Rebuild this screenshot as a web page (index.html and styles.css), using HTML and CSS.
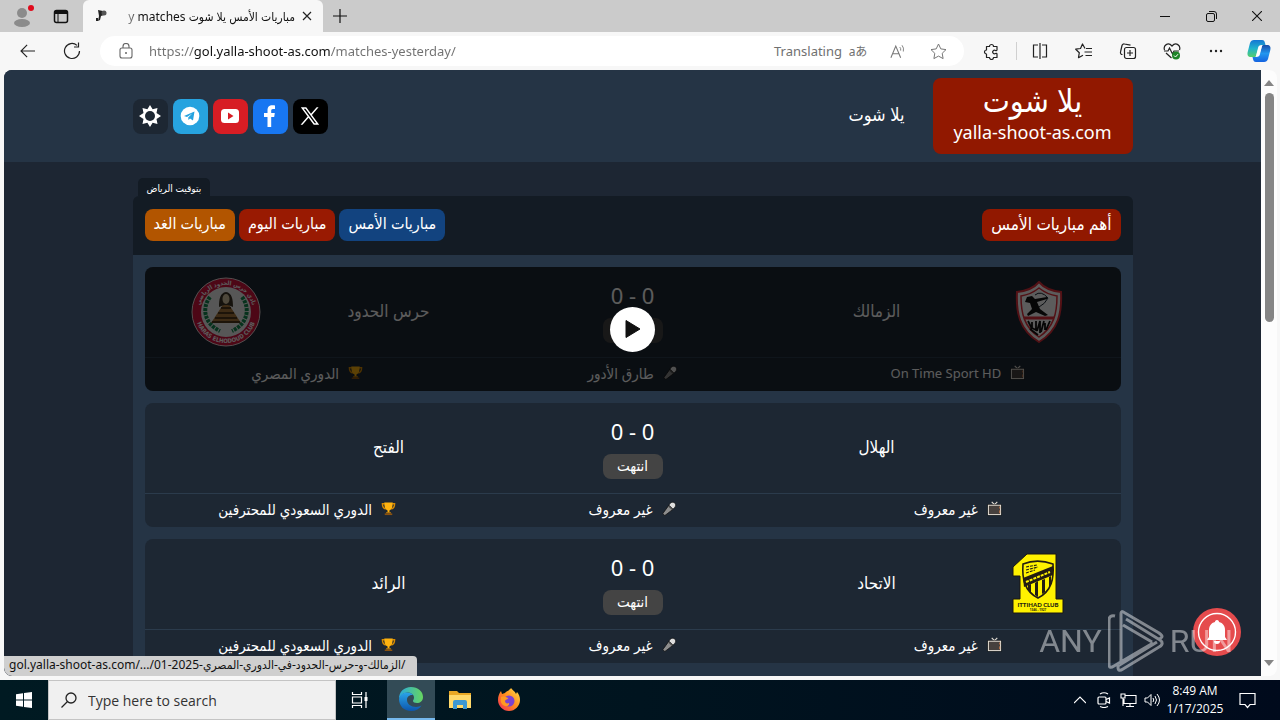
FILE: index.html
```
<!DOCTYPE html>
<html lang="ar">
<head>
    <meta charset="UTF-8">
    <meta name="viewport" content="width=device-width, initial-scale=1.0">
    <title>مباريات الأمس يلا شوت</title>
    <link rel="stylesheet" href="styles.css">
</head>
<body>
    <!-- Shared icons -->
    <svg class="sprite" aria-hidden="true">
        <symbol id="i-tv" viewBox="0 0 16 16">
            <path d="M5 1l3 3 3-3" fill="none" stroke="#e4ded4" stroke-width="1.200"/>
            <rect x=".5" y="3.500" width="15" height="12" fill="#0c0c0c"/>
            <rect x="1.500" y="4.500" width="13" height="10" fill="#47413e" stroke="#e4ded4" stroke-width="1.100"/>
            <path d="M13.500 6v2M13.500 10v3" stroke="#c77a4a" stroke-width="1"/>
        </symbol>
        <symbol id="i-mic" viewBox="0 0 16 16">
            <path d="M3 15.500L.8 13.500 7 5l4.500 4z" fill="#8d8d8d" stroke="#111" stroke-width=".8"/>
            <path d="M7.500 4.500c1-3 4-4 6-2.500 2 2 1 5-2 6.500z" fill="#dedede" stroke="#111" stroke-width=".8"/>
            <path d="M7 5.500l4 3.500" stroke="#555" stroke-width="1.300"/>
        </symbol>
        <symbol id="i-cup" viewBox="0 0 16 16">
            <path d="M4 3H1.500c0 3 1 5 3.500 5.500M12 3h2.500c0 3-1 5-3.500 5.500" fill="none" stroke="#d88b00" stroke-width="1.500"/>
            <path d="M3.500 1.500h9c0 5-1 7.500-3.500 8.500v2H7v-2C4.500 9 3.500 6.500 3.500 1.500z" fill="#ffb310"/>
            <path d="M5.500 12h5v1.200h-5z" fill="#d88b00"/>
            <path d="M4 13.200h8V15H4z" fill="#8a5210"/>
        </symbol>
    </svg>

    <div class="tab-strip">
        <button class="strip-button profile" aria-label="Profile">
            <svg width="24" height="24" viewBox="0 0 24 24"><circle cx="11" cy="9" r="5" fill="#8b8b8b"/><ellipse cx="11" cy="19" rx="8" ry="4" fill="#8b8b8b"/><circle cx="20" cy="4" r="3" fill="#e00b1c"/></svg>
        </button>
        <button class="strip-button" aria-label="Tab actions">
            <svg width="16" height="16" viewBox="0 0 16 16"><rect x="1.500" y="2.500" width="13" height="12" rx="2" fill="none" stroke="#111" stroke-width="1.500"/><path d="M2 3h12v3H2z" fill="#111"/><path d="M5 6v8" stroke="#111"/></svg>
        </button>
        <div class="tab">
            <svg width="14" height="14" viewBox="0 0 14 14"><path d="M3 1l5 1 3 1-2 3-3 1-1 4-2 1 1-5zM1 9h2v3H1z" fill="#222"/><circle cx="9" cy="4" r="2.500" fill="#555"/></svg>
            <span class="tab-title" dir="rtl">مباريات الأمس يلا شوت y matches</span>
            <button class="tab-close" aria-label="Close tab">
                <svg width="10" height="10" viewBox="0 0 10 10"><path d="M1 1l8 8M9 1l-8 8" stroke="#222" stroke-width="1.200"/></svg>
            </button>
        </div>
        <button class="new-tab" aria-label="New tab">
            <svg width="14" height="14" viewBox="0 0 14 14"><path d="M7 0v14M0 7h14" stroke="#111" stroke-width="1.200"/></svg>
        </button>
        <div class="window-controls">
            <button aria-label="Minimize"><svg width="10" height="10" viewBox="0 0 10 10"><path d="M0 5.500h10" stroke="#111"/></svg></button>
            <button aria-label="Restore"><svg width="11" height="11" viewBox="0 0 11 11"><rect x=".5" y="2.500" width="8" height="8" rx="1.500" fill="none" stroke="#111"/><path d="M3 .5h5a2.500 2.500 0 0 1 2.500 2.500v5" fill="none" stroke="#111"/></svg></button>
            <button aria-label="Close"><svg width="10" height="10" viewBox="0 0 10 10"><path d="M0 0l10 10M10 0L0 10" stroke="#111" stroke-width="1.100"/></svg></button>
        </div>
    </div>

    <div class="toolbar">
        <button class="nav-button" aria-label="Back"><svg width="16" height="14" viewBox="0 0 18 16"><path d="M17 8H1.500M8 1L1 8l7 7" fill="none" stroke="#222" stroke-width="1.300"/></svg></button>
        <button class="nav-button" aria-label="Refresh"><svg width="18" height="18" viewBox="0 0 18 18"><path d="M16.500 9A7.500 7.500 0 1 1 14 3.400M15.500.5V5H11" fill="none" stroke="#222" stroke-width="1.200"/></svg></button>
        <div class="address">
            <svg width="14" height="16" viewBox="0 0 14 16"><rect x="1" y="5" width="12" height="10" rx="2" fill="none" stroke="#666" stroke-width="1.100"/><path d="M4 5V3.500a3 3 0 0 1 6 0V5" fill="none" stroke="#666" stroke-width="1.100"/><circle cx="7" cy="10" r="1" fill="#666"/></svg>
            <input class="url" type="text" aria-label="Address" value="https://gol.yalla-shoot-as.com/matches-yesterday/">
            <span class="translating">Translating</span>
            <button class="translate" aria-label="Translate">aあ</button>
            <button aria-label="Read aloud"><svg width="16" height="15" viewBox="0 0 18 16"><path d="M1 15L6.500 2 12 15M3 10.500h7" fill="none" stroke="#777" stroke-width="1.200"/><path d="M11 3q1.500 1.500 1 4M13.500 1q2.500 3 1.500 7" fill="none" stroke="#777"/></svg></button>
            <button aria-label="Favorite"><svg width="17" height="17" viewBox="0 0 17 17"><path d="M8.500 1l2.300 4.900 5.200.7-3.800 3.700.9 5.300-4.600-2.500-4.600 2.500.9-5.300L1 6.600l5.200-.7z" fill="none" stroke="#777" stroke-linejoin="round"/></svg></button>
        </div>
        <button class="tool" aria-label="Extensions"><svg width="16" height="17" viewBox="0 0 16 17"><path d="M3.500 3.500h3a2 2 0 0 1 4 0h3.500v3.500a1 1 0 0 1-1.500.5 1.800 1.800 0 1 0 0 3 1 1 0 0 1 1.500.5v3.500h-3.500a2 2 0 0 1-4 0h-3V11a2 2 0 1 1 0-4z" fill="none" stroke="#222" stroke-width="1.200" stroke-linejoin="round"/></svg></button>
        <span class="divider"></span>
        <button class="tool" aria-label="Split screen"><svg width="16" height="16" viewBox="0 0 16 16"><path d="M6 2H1.500v12H6M10 2h4.500v12H10M8 0v16" fill="none" stroke="#222" stroke-width="1.200"/></svg></button>
        <button class="tool" aria-label="Favorites"><svg width="18" height="16" viewBox="0 0 18 16"><path d="M10 5.500L7.500 1 5.500 5.500l-4.800.7 3.600 3.500-.8 5 4.500-2.500M11 5.500h6M9.500 9H17M10.500 12.500H17" fill="none" stroke="#222" stroke-width="1.200" stroke-linejoin="round"/></svg></button>
        <button class="tool" aria-label="Collections"><svg width="18" height="18" viewBox="0 0 18 18"><path d="M3.500 12.500A2 2 0 0 1 1.500 10L3 3.500A2 2 0 0 1 5.500 2l6 1.200" fill="none" stroke="#222" stroke-width="1.200"/><rect x="5.500" y="5.500" width="11" height="11" rx="2" fill="none" stroke="#222" stroke-width="1.200"/><path d="M11 8v6M8 11h6" stroke="#222" stroke-width="1.200"/></svg></button>
        <button class="tool" aria-label="Browser essentials"><svg width="18" height="18" viewBox="0 0 18 18"><path d="M1.500 8C0 3.500 5-.5 9 4c4-4.500 9-.5 7.500 4M1 9h4l1.500-3 3 6L11 9h5M3 11l5.500 5" fill="none" stroke="#222" stroke-width="1.200"/><circle cx="13" cy="13.500" r="4" fill="#1e8428"/><path d="M11 13.500l1.500 1.500 2.500-2.800" fill="none" stroke="#fff"/></svg></button>
        <button class="tool" aria-label="More"><svg width="14" height="4" viewBox="0 0 14 4"><g fill="#222"><circle cx="2" cy="2" r="1.200"/><circle cx="7" cy="2" r="1.200"/><circle cx="12" cy="2" r="1.200"/></g></svg></button>
        <button class="tool copilot" aria-label="Copilot">
            <svg width="24" height="24" viewBox="0 0 24 24">
                <defs>
                    <linearGradient id="cp1" x1="0" y1="0" x2="0" y2="1"><stop offset="0" stop-color="#1476d4"/><stop offset=".5" stop-color="#20b3cc"/><stop offset="1" stop-color="#55cf6d"/></linearGradient>
                    <linearGradient id="cp2" x1="0" y1="0" x2="0" y2="1"><stop offset="0" stop-color="#174ba8"/><stop offset=".5" stop-color="#2296ef"/><stop offset="1" stop-color="#1463e0"/></linearGradient>
                </defs>
                <path d="M7 1h8c2 0 2.500 1 3 3l.5 2h-4c-2 0-3 1-3.500 3l-2 8c-.5 1-1 1-2 1H4c-3 0-4-2-3.300-5L3 4c.7-2 2-3 4-3z" fill="url(#cp1)"/>
                <path d="M17 23H9c-2 0-2.500-1-3-3l-.5-2h4c2 0 3-1 3.500-3l2-8c.5-1 1-1 2-1h3c3 0 4 2 3.300 5L21 20c-.7 2-2 3-4 3z" fill="url(#cp2)"/>
                <path d="M12 7h3l-3 10H9z" fill="#fff" opacity=".85"/>
            </svg>
        </button>
    </div>

    <div class="viewport">
        <div class="site" dir="rtl">
            <header class="header">
                <div class="container header-inner">
                    <a class="brand" href="#">
                        <span class="brand-name">يلا شوت</span>
                        <span class="brand-domain">yalla-shoot-as.com</span>
                    </a>
                    <a class="nav-link" href="#">يلا شوت</a>
                    <div class="social">
                        <a class="social-x" href="#" aria-label="X"><svg width="20" height="20" viewBox="0 0 24 24"><path d="M1 1.500h6.500l5.700 7.700L20 1.500h2.300l-8 9.200L23 22.500h-6.500l-6.200-8.300L3 22.500H.7l8.500-9.900zM4.500 3.300l13 17.400h2L6.600 3.300z" fill="#fff" fill-rule="evenodd"/></svg></a>
                        <a class="social-facebook" href="#" aria-label="Facebook"><svg width="22" height="24" viewBox="0 0 22 24"><path d="M8.500 23v-10H5V9h3.500V6.500C8.500 3 10 1.300 13.500 1.300c1 0 2 .1 2.500.2V5h-2c-1.500 0-1.800.8-1.800 2v2h3.600l-.6 4h-3v10z" fill="#fff"/></svg></a>
                        <a class="social-youtube" href="#" aria-label="YouTube"><svg width="20" height="20" viewBox="0 0 20 20"><rect x="1" y="3" width="18" height="14" rx="3.500" fill="#fff"/><path d="M8 6.500l5.500 3.500L8 13.500z" fill="#d71d24"/></svg></a>
                        <a class="social-telegram" href="#" aria-label="Telegram"><svg width="20" height="20" viewBox="0 0 20 20"><circle cx="10" cy="10" r="9.300" fill="#fff"/><path d="M4 10l10.500-4.500-1.500 9-3-2-1.500 1.500-.3-2.500 4-4-5.200 3.400z" fill="#27a3df"/></svg></a>
                        <button class="theme" aria-label="Theme"><svg width="24" height="24" viewBox="0 0 24 24"><path d="M12 1l2.600 4.200 4.900-1.200-1 4.900L23 12l-4.500 3 1 4.900-4.900-1.100L12 23l-2.600-4.200-4.900 1.100 1-4.900L1 12l4.500-3.100-1-4.900 4.900 1.200z" fill="#fff"/><circle cx="12" cy="12" r="5" fill="#1d2733"/><circle cx="12" cy="12" r="3.800" fill="#1d2733"/></svg></button>
                    </div>
                </div>
            </header>

            <main class="container matches">
                <div class="timezone">بتوقيت الرياض</div>
                <div class="matches-head">
                    <h1 class="matches-title">أهم مباريات الأمس</h1>
                    <nav class="days">
                        <a class="day day-yesterday" href="#">مباريات الأمس</a>
                        <a class="day day-today" href="#">مباريات اليوم</a>
                        <a class="day day-tomorrow" href="#">مباريات الغد</a>
                    </nav>
                </div>
                <div class="match-list">
                    <a class="match" href="#">
                        <div class="match-teams">
                            <span class="crest">
                                <svg width="48" height="62" viewBox="0 0 48 62">
                                    <path d="M24 1c5 6 13 9 22 10 1 20-2 38-22 50C4 49 1 31 2 11 11 10 19 7 24 1z" fill="#fff" stroke="#e3303c" stroke-width="2"/>
                                    <path d="M24 7c5 4 11 7 18 8 0 17-3 31-18 41C9 46 6 32 6 15 13 14 19 11 24 7z" fill="#fff" stroke="#e3303c" stroke-width="1.500"/>
                                    <path d="M12 16l5-1 3 3 12-2v2l-10 3 3 7 8 6-3 1-9-4-8 4-1-2 5-5-2-6-5-1z" fill="#111"/>
                                    <path d="M20 14q6-5 13 3q-3 6-9 9" fill="none" stroke="#1b2733"/>
                                    <path d="M9 37h30" stroke="#e3303c" stroke-width="3"/>
                                    <path d="M13 40l4 8M17 41v6l4 2v-9M22 50l3-10v12M29 40l-3 11M30 42v7M35 40l-4 9M15 48l8 6" stroke="#111" stroke-width="1.800" fill="none"/>
                                </svg>
                            </span>
                            <span class="team">الزمالك</span>
                            <span class="result"><span class="score">0 - 0</span><span class="state">انتهت</span></span>
                            <span class="team">حرس الحدود</span>
                            <span class="crest">
                                <svg width="70" height="70" viewBox="0 0 70 70">
                                    <defs>
                                        <path id="ring-bottom" d="M4 35a31 31 0 0 0 62 0"/>
                                        <path id="ring-top" d="M8 35a27 27 0 0 1 54 0"/>
                                    </defs>
                                    <circle cx="35" cy="35" r="34" fill="#d4143f" stroke="#e9d9d9" stroke-width="1"/>
                                    <circle cx="35" cy="35" r="25" fill="#f2f2f2"/>
                                    <path d="M19 20c-9 12-5 27 10 34M51 20c9 12 5 27-10 34" fill="none" stroke="#168a50" stroke-width="4" stroke-dasharray="3 1"/>
                                    <path d="M35 23l15 23H20z" fill="#a8793b"/>
                                    <path d="M30 31h10M27 36h16M24 41h22M21 45h28" stroke="#33230f" stroke-width="1.500"/>
                                    <path d="M28 30c0-8 1-14 7-15 6 1 7 7 7 15l-5-2h-4z" fill="#3c3424"/>
                                    <ellipse cx="35" cy="22" rx="3.500" ry="5" fill="#d9c7a4"/>
                                    <text class="crest-text"><textPath href="#ring-bottom" startOffset="50%" text-anchor="middle">HARAS ELHODOUD CLUB</textPath></text>
                                    <text class="crest-text"><textPath href="#ring-top" startOffset="50%" text-anchor="middle">نادي حرس الحدود الرياضي</textPath></text>
                                </svg>
                            </span>
                        </div>
                        <div class="match-info">
                            <span class="latin"><svg class="icon"><use href="#i-tv"/></svg>On Time Sport HD</span>
                            <span><svg class="icon"><use href="#i-mic"/></svg>طارق الأدور</span>
                            <span><svg class="icon"><use href="#i-cup"/></svg>الدوري المصري</span>
                        </div>
                        <div class="match-overlay">
                            <span class="play"><svg width="16" height="20" viewBox="0 0 16 20"><path d="M1 1.500v17L15 10z" fill="#111" stroke="#111" stroke-linejoin="round"/></svg></span>
                        </div>
                    </a>

                    <a class="match" href="#">
                        <div class="match-teams">
                            <span class="crest"></span>
                            <span class="team">الهلال</span>
                            <span class="result"><span class="score">0 - 0</span><span class="state">انتهت</span></span>
                            <span class="team">الفتح</span>
                            <span class="crest"></span>
                        </div>
                        <div class="match-info">
                            <span><svg class="icon"><use href="#i-tv"/></svg>غير معروف</span>
                            <span><svg class="icon"><use href="#i-mic"/></svg>غير معروف</span>
                            <span><svg class="icon"><use href="#i-cup"/></svg>الدوري السعودي للمحترفين</span>
                        </div>
                    </a>

                    <a class="match" href="#">
                        <div class="match-teams">
                            <span class="crest">
                                <svg width="54" height="62" viewBox="0 0 54 62">
                                    <path d="M15 1h29v45h7v14H1V46h7V23H1V14z" fill="#fff200" stroke="#1a1712" stroke-width="1"/>
                                    <path d="M11 11c10-4 19-4 30 0 1 14-1 27-15 34-14-7-16-20-15-34z" fill="#fff200" stroke="#231c12" stroke-width="1.600"/>
                                    <path d="M11 25l30-12v9L12 34z" fill="#231c12"/>
                                    <path d="M14 29l24-10" stroke="#fff200" stroke-width="2" stroke-dasharray="3 1"/>
                                    <path d="M14 14l11-2M14 17l12-3M14 20l9-3" stroke="#231c12" stroke-width="1.200" stroke-dasharray="3 1"/>
                                    <path d="M16 32v5l3 3v-9zM23 30v12l3 2V28zM30 27v14l3-2V26zM37 24v11l2-4v-8z" fill="#231c12"/>
                                    <text class="club-name" x="26" y="54" text-anchor="middle">ITTIHAD CLUB</text>
                                    <text class="club-year" x="26" y="58" text-anchor="middle">1927 - 1346</text>
                                </svg>
                            </span>
                            <span class="team">الاتحاد</span>
                            <span class="result"><span class="score">0 - 0</span><span class="state">انتهت</span></span>
                            <span class="team">الرائد</span>
                            <span class="crest"></span>
                        </div>
                        <div class="match-info">
                            <span><svg class="icon"><use href="#i-tv"/></svg>غير معروف</span>
                            <span><svg class="icon"><use href="#i-mic"/></svg>غير معروف</span>
                            <span><svg class="icon"><use href="#i-cup"/></svg>الدوري السعودي للمحترفين</span>
                        </div>
                    </a>
                </div>
            </main>
        </div>
        <div class="scrollbar">
            <svg width="10" height="6" viewBox="0 0 10 6"><path d="M5 0l5 6H0z" fill="#858585"/></svg>
            <div class="scroll-thumb"></div>
            <svg width="10" height="6" viewBox="0 0 10 6"><path d="M5 6l5-6H0z" fill="#858585"/></svg>
        </div>

        <button class="bell" aria-label="Notifications">
            <svg width="48" height="48" viewBox="0 0 48 48"><circle cx="24" cy="24" r="24" fill="#e54b4d"/><circle cx="24" cy="24" r="18.500" fill="none" stroke="#fff" stroke-width="1.400"/><path d="M24 12c1.500 0 2 1 2 2 4 1 6 4 6 8v7l2 3H14l2-3v-7c0-4 2-7 6-8 0-1 .5-2 2-2zM21 33h6a3 3 0 0 1-6 0z" fill="#fff"/></svg>
        </button>
        <div class="watermark">
            <span>ANY</span>
            <svg width="56" height="64" viewBox="0 0 56 64"><path d="M7 7c-4-1-6 1-6 4v44c0 4 2 4 5 2l39-23M13 36V5c0-3 1-3 4-1l34 20c4 3 4 4 0 6M13 11v44l36-22M15 16l29 17M10 56v2c0 4 2 4 5 2l36-22c4-2 4-5 1-7L18 10" fill="none" stroke="currentColor" stroke-width="3"/></svg>
            <span>RUN</span>
        </div>
        <div class="status-bubble" dir="ltr">gol.yalla-shoot-as.com/.../الزمالك-و-حرس-الحدود-في-الدوري-المصري-2025-01/</div>
    </div>

    <div class="taskbar">
        <button class="start" aria-label="Start"><svg width="16" height="16" viewBox="0 0 16 16"><path d="M0 2.300L7 1.200v6.300H0zM8 1l8-1v7.500H8zM0 8.500h7v6.300l-7-1zM8 8.500h8V16l-8-1z" fill="#fff"/></svg></button>
        <label class="search">
            <svg width="16" height="16" viewBox="0 0 16 16"><circle cx="10" cy="6" r="5" fill="none" stroke="#222" stroke-width="1.300"/><path d="M6.500 9.500L.5 15.500" stroke="#222" stroke-width="1.300"/></svg>
            <input type="text" placeholder="Type here to search" aria-label="Type here to search">
        </label>
        <button class="app" aria-label="Task view"><svg width="18" height="16" viewBox="0 0 18 16"><path d="M1.500 0v2.500h9V0M1.500 16v-2.500h9V16M1.500 5h9v6h-9zM15 0v16" fill="none" stroke="#fff" stroke-width="1.200"/><path d="M13.500 5h3v4h-3z" fill="#fff"/></svg></button>
        <button class="app app-active" aria-label="Microsoft Edge">
            <svg width="24" height="24" viewBox="0 0 24 24">
                <defs>
                    <linearGradient id="e1" x1="0" y1="0" x2="1" y2="0"><stop offset="0" stop-color="#2aa9dc"/><stop offset="1" stop-color="#67d65f"/></linearGradient>
                    <linearGradient id="e2" x1="0" y1="0" x2="0" y2="1"><stop offset="0" stop-color="#2aa4e8"/><stop offset="1" stop-color="#0d56ad"/></linearGradient>
                </defs>
                <path d="M12 0c7 0 12 4.500 12 10 0 4-3 6-6 6-2.500 0-4-1-4-2s1-1.500 1-3.500c0-3-3-5-7-5-3 0-6 2-8 6C0 5 5 0 12 0z" fill="url(#e1)"/>
                <path d="M0 12c1-4 4-6.500 8-6.500 3 0 5 1 6 2.500-4-.5-6 2-6 5 0 4 4 7 9 7 2.500 0 4-.8 5.500-1.500C20.500 22 17 24 12 24 5 24 0 19 0 12z" fill="url(#e2)"/>
            </svg>
        </button>
        <button class="app" aria-label="File Explorer"><svg width="22" height="20" viewBox="0 0 22 20"><path d="M0 1h8l2 2h12v15H0z" fill="#e9a825"/><path d="M0 5h22v13H0z" fill="#ffd96b"/><path d="M4 19v-7q0-2 2-2h10q2 0 2 2v7h-4v-4H8v4z" fill="#3b97d3"/></svg></button>
        <button class="app" aria-label="Firefox">
            <svg width="24" height="24" viewBox="0 0 24 24">
                <defs><linearGradient id="ff" x1="1" y1="0" x2="0" y2="1"><stop offset="0" stop-color="#ffe34a"/><stop offset=".5" stop-color="#ff8a1d"/><stop offset="1" stop-color="#f2255e"/></linearGradient></defs>
                <path d="M14 0c1 2 4 3 5 6l1-2c2 2 3 5 3 8 0 6-5 11-11 11S1 18 1 12c0-4 1-6 3-9l1 3 3-1c1-2 4-2 6-5z" fill="url(#ff)"/>
                <circle cx="12" cy="13" r="5.500" fill="#7b42d0"/>
                <path d="M4 9c3-1 5 0 7 1 1 1-2 1-3 3 0 2 2 3 4 2 1 4-5 4-7 1s-1-5-1-7z" fill="#ff9a22"/>
            </svg>
        </button>
        <div class="tray">
            <button aria-label="Show hidden icons"><svg width="12" height="8" viewBox="0 0 12 8"><path d="M0 7l6-6 6 6" fill="none" stroke="#fff" stroke-width="1.200"/></svg></button>
            <button aria-label="Meet now"><svg width="14" height="16" viewBox="0 0 14 16"><rect x="1" y="5" width="8" height="7" rx="1" fill="none" stroke="#fff" stroke-width="1.200"/><path d="M9 7.500L12.500 6v5L9 9.500M3 2q4-2.500 8 0M3 14.500q4 2 8 0" fill="none" stroke="#fff" stroke-width="1.200"/></svg></button>
            <button aria-label="Network"><svg width="17" height="15" viewBox="0 0 17 15"><path d="M5 2.500h11v8H4V6M6 13.500h8M10 10.500v3M1 1h4v4H1zM3 5v8" fill="none" stroke="#fff" stroke-width="1.100"/></svg></button>
            <button aria-label="Volume"><svg width="17" height="14" viewBox="0 0 17 14"><path d="M1 5v4h2.500L7 12.500v-11L3.500 5z" fill="none" stroke="#fff"/><path d="M9 5q1.500 2 0 4M11 3q3 4 0 8M13 1q5 6 0 12" fill="none" stroke="#fff"/></svg></button>
            <div class="clock"><span>8:49 AM</span><span>1/17/2025</span></div>
            <button class="action-center" aria-label="Action center"><svg width="17" height="17" viewBox="0 0 17 17"><path d="M1 1.500h15v11h-5l-2.500 3-2.500-3H1z" fill="none" stroke="#fff" stroke-width="1.200"/></svg></button>
        </div>
    </div>
</body>
</html>
```
FILE: styles.css
```
* {
    margin: 0;
    padding: 0;
    box-sizing: border-box;
}

body {
    height: 100vh;
    display: flex;
    flex-direction: column;
    overflow: hidden;
    background: #f7f7f7;
    font-family: "Noto Sans", "DejaVu Sans Condensed", "DejaVu Sans", sans-serif;
    font-size: 13px;
    color: #222;
}

button {
    display: flex;
    align-items: center;
    justify-content: center;
    border: none;
    background: none;
    font: inherit;
    color: inherit;
    cursor: pointer;
}

a {
    color: inherit;
    text-decoration: none;
}

.sprite {
    display: none;
}

/* Browser tabs */
.tab-strip {
    display: flex;
    flex: none;
    height: 32px;
    background: #cbcbcb;
}

.strip-button {
    width: 34px;
}

.strip-button.profile {
    width: 42px;
    margin-left: 2px;
}

.tab {
    display: flex;
    align-items: center;
    width: 240px;
    margin-left: 5px;
    padding: 0 8px 0 12px;
    background: #f7f7f7;
    border-radius: 6px 6px 0 0;
}

.tab-title {
    flex: 1;
    margin-left: 8px;
    white-space: nowrap;
    font-size: 12px;
    color: #111;
    mask-image: linear-gradient(to right, transparent, #000 24px);
}

.tab-close {
    width: 16px;
    height: 20px;
    margin-left: 4px;
}

.new-tab {
    width: 34px;
}

.window-controls {
    display: flex;
    margin-left: auto;
}

.window-controls button {
    width: 46px;
}

/* Address bar */
.toolbar {
    display: flex;
    flex: none;
    align-items: center;
    height: 38px;
    padding-left: 6px;
}

.nav-button {
    width: 44px;
    height: 30px;
}

.address {
    display: flex;
    flex: 1;
    align-items: center;
    height: 30px;
    margin: 0 5px 0 6px;
    padding: 0 6px 0 19px;
    background: #fff;
    border-radius: 15px;
}

.url {
    flex: 1;
    min-width: 0;
    height: 24px;
    margin-left: 16px;
    border: none;
    outline: none;
    font: inherit;
    color: transparent;
    background: linear-gradient(to right, #707070 45px, #111 45px, #111 182px, #707070 182px);
    background-clip: text;
    -webkit-background-clip: text;
}

.translating {
    color: #707070;
}

.address button {
    width: 40px;
    height: 26px;
    color: #707070;
}

.address .translate {
    width: 32px;
    margin-right: 4px;
    font-family: "Noto Sans", "Noto Sans CJK JP", sans-serif;
    font-size: 12px;
}

.tool {
    width: 44px;
    height: 30px;
}

.copilot {
    width: 42px;
}

.divider {
    width: 1px;
    height: 18px;
    margin: 0 1px 0 3px;
    background: #d0d0d0;
}

/* Page area */
.viewport {
    position: relative;
    display: flex;
    flex: 1;
    min-height: 0;
    margin: 0 3px 4px 4px;
    overflow: hidden;
    border-radius: 8px;
    background: #fdfdfd;
}

.site {
    flex: 1;
    overflow: hidden;
    background: #1d2633;
    color: #fff;
}

.scrollbar {
    display: flex;
    flex-direction: column;
    align-items: center;
    width: 16px;
    padding: 10px 0;
}

.scroll-thumb {
    width: 9px;
    height: 39%;
    margin: 7px 0 auto;
    border-radius: 5px;
    background: #858585;
}

.container {
    width: 100%;
    max-width: 1000px;
    margin: 0 auto;
}

.header {
    padding: 8px 0;
    background: #253445;
}

.header-inner {
    display: flex;
    align-items: center;
}

.brand {
    display: flex;
    flex-direction: column;
    align-items: center;
    width: 200px;
    height: 76px;
    padding-top: 2px;
    border-radius: 8px;
    background: #911800;
}

.brand-name {
    font-size: 32px;
    line-height: 40px;
}

.brand-domain {
    font-size: 18px;
    line-height: 24px;
}

.nav-link {
    margin-right: 28px;
    padding-bottom: 4px;
    font-size: 18px;
}

.social {
    display: flex;
    gap: 5px;
    margin-right: auto;
}

.social a,
.social button {
    display: flex;
    align-items: center;
    justify-content: center;
    width: 35px;
    height: 35px;
    border-radius: 8px;
}

.social-x {
    background: #000;
}

.social-facebook {
    background: #1877f2;
}

.social-youtube {
    background: #d71d24;
}

.social-telegram {
    background: #27a3df;
}

.theme {
    background: #1d2733;
}

/* Matches */
.matches {
    padding-top: 16px;
}

.timezone {
    width: fit-content;
    height: 18px;
    margin: 0 auto 0 5px;
    padding: 0 9px;
    border-radius: 5px 5px 0 0;
    background: #131b24;
    font-size: 10px;
    line-height: 20px;
}

.matches-head {
    display: flex;
    align-items: flex-start;
    justify-content: space-between;
    height: 59px;
    padding: 13px 12px;
    border-radius: 6px 6px 0 0;
    background: #131b24;
}

.matches-title,
.day {
    height: 32px;
    padding: 0 9px;
    border-radius: 8px;
    font-size: 16px;
    font-weight: 400;
    line-height: 28px;
}

.matches-title {
    background: #911800;
    font-size: 17px;
    line-height: 30px;
}

.days {
    display: flex;
    gap: 4px;
}

.day-yesterday {
    background: #12437f;
}

.day-today {
    background: #991a02;
}

.day-tomorrow {
    background: #b25500;
}

.match-list {
    display: flex;
    flex-direction: column;
    gap: 12px;
    padding: 12px 12px 40px;
    background: #253445;
}

.match {
    position: relative;
    overflow: hidden;
    border-radius: 8px;
    background: #1d2733;
}

.match-teams {
    display: grid;
    grid-template-columns: 1fr 1fr 2fr 1fr 1fr;
    align-items: center;
    height: 90px;
    text-align: center;
}

.crest {
    display: flex;
    justify-content: center;
}

.crest-text {
    font-family: "DejaVu Sans Condensed", "DejaVu Sans", sans-serif;
    font-size: 6px;
    font-weight: 700;
    fill: #fff;
}

.club-name {
    font-family: Lato, sans-serif;
    font-size: 6px;
    font-weight: 900;
    fill: #231c12;
}

.club-year {
    font-size: 3px;
    font-weight: 700;
    fill: #231c12;
}

.team {
    padding-bottom: 3px;
    font-size: 17px;
}

.result {
    display: flex;
    flex-direction: column;
    align-items: center;
    gap: 8px;
}

.score {
    font-size: 22px;
    line-height: 26px;
    padding-bottom: 2px;
}

.state {
    width: 60px;
    height: 25px;
    border-radius: 8px;
    background: #444;
    font-size: 15px;
    line-height: 22px;
}

.match-info {
    display: grid;
    grid-template-columns: repeat(3, 1fr);
    height: 34px;
    padding-bottom: 4px;
    border-top: 1px solid #2b3b4c;
}

.match-info span {
    display: flex;
    align-items: center;
    justify-content: center;
    gap: 9px;
    font-size: 15px;
    line-height: 20px;
}

.match-info .latin {
    font-size: 13px;
}

.icon {
    width: 15px;
    height: 15px;
}

.match-overlay {
    position: absolute;
    inset: 0;
    display: flex;
    align-items: center;
    justify-content: center;
    background: rgba(0, 0, 0, 0.64);
}

.play {
    display: flex;
    align-items: center;
    justify-content: center;
    width: 45px;
    height: 45px;
    border-radius: 50%;
    background: #fff;
}

/* Floating parts */
.bell {
    position: absolute;
    right: 36px;
    bottom: 20px;
}

.watermark {
    position: absolute;
    right: 44px;
    bottom: 3px;
    display: flex;
    align-items: center;
    gap: 6px;
    color: #fff;
    opacity: 0.45;
    font-family: Roboto, sans-serif;
    font-size: 32px;
}

.status-bubble {
    position: absolute;
    left: 0;
    bottom: 0;
    height: 20px;
    padding: 0 11px 0 5px;
    border-radius: 0 4px 0 8px;
    background: #cfcfcf;
    color: #111;
    font-size: 12px;
    line-height: 18px;
    white-space: nowrap;
}

/* Taskbar */
.taskbar {
    display: flex;
    flex: none;
    height: 40px;
    background: linear-gradient(to right, #001a22, #00141f 50%, #000a1c);
    color: #fff;
    font-family: "Open Sans", sans-serif;
}

.start {
    width: 48px;
}

.search {
    display: flex;
    align-items: center;
    gap: 11px;
    width: 288px;
    padding-left: 12px;
    background: #f0f0f0;
    border: 1px solid #c4c4c4;
}

.search input {
    flex: 1;
    min-width: 0;
    border: none;
    outline: none;
    background: none;
    font: 14px "Open Sans", sans-serif;
}

.search input::placeholder {
    color: #333;
}

.app {
    width: 48px;
    margin-right: 1px;
}

.app-active {
    margin-left: 2px;
    background: #334b56;
    border-bottom: 2px solid #76b9ed;
}

.tray {
    display: flex;
    align-items: stretch;
    margin-left: auto;
}

.tray button {
    width: 24px;
}

.clock {
    display: flex;
    flex-direction: column;
    align-items: center;
    justify-content: center;
    width: 62px;
    font-size: 12px;
    line-height: 18px;
}

.tray .action-center {
    width: 42px;
    margin-right: 12px;
}
```
